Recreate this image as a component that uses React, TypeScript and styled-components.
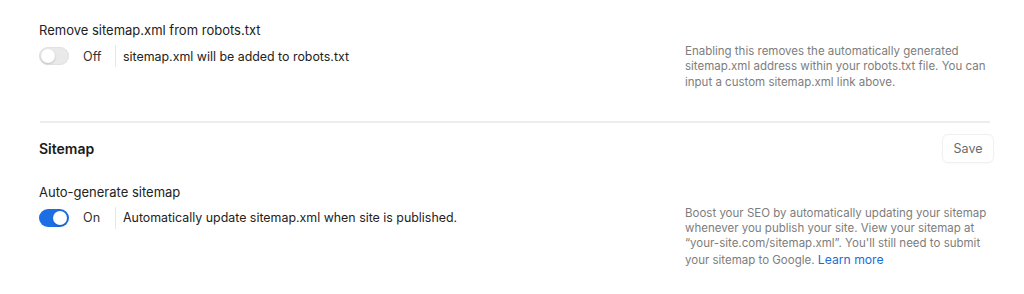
import React from "react";
import styled, { createGlobalStyle } from "styled-components";

const GlobalStyle = createGlobalStyle`
  html, body {
    margin: 0;
    padding: 0;
    background: #ffffff;
  }
  body {
    font-family: Inter, "Noto Sans", "Liberation Sans", sans-serif;
    color: #1f1f1f;
    -webkit-font-smoothing: antialiased;
  }
`;

const Page = styled.div`
  width: 954px;
  margin-left: 39px;
  display: flex;
  flex-direction: column;
`;

const Section = styled.section<{ $top: number; $bottom: number }>`
  display: grid;
  grid-template-columns: 646px 1fr;
  align-items: start;
  padding-top: ${(p) => p.$top}px;
  padding-bottom: ${(p) => p.$bottom}px;
`;

const Control = styled.div`
  display: flex;
  flex-direction: column;
  gap: 6px;
`;

const Label = styled.div`
  font-size: 13px;
  line-height: 18px;
  color: #222222;
`;

const ToggleRow = styled.div`
  display: flex;
  align-items: center;
  height: 22px;
`;

const Track = styled.span<{ $on: boolean }>`
  position: relative;
  flex: none;
  width: 30px;
  height: 18px;
  border-radius: 9px;
  background: ${(p) => (p.$on ? "#1b6ee3" : "#e9e9e9")};
  box-shadow: ${(p) => (p.$on ? "none" : "inset 0 0 0 1px #e2e2e2")};
`;

const Knob = styled.span<{ $on: boolean }>`
  position: absolute;
  top: 2px;
  left: ${(p) => (p.$on ? "14px" : "2px")};
  width: 14px;
  height: 14px;
  border-radius: 50%;
  background: #ffffff;
  box-shadow: 0 1px 2px rgba(0, 0, 0, 0.18);
`;

const Status = styled.span`
  width: 32px;
  margin-left: 14px;
  font-size: 12.6px;
  color: #333333;
`;

const VDivider = styled.span`
  width: 1px;
  height: 22px;
  background: #e6e6e6;
  margin-right: 7px;
`;

const Desc = styled.span`
  font-size: 12.4px;
  color: #222222;
`;

const Help = styled.p<{ $offset: number }>`
  margin: ${(p) => p.$offset}px 0 0;
  width: 306px;
  font-size: 11.5px;
  line-height: 15.3px;
  color: #7d7d7d;
`;

const Link = styled.a`
  color: #1a6dd4;
  text-decoration: none;
  font-size: 12.2px;
  line-height: 15px;
`;

const Rule = styled.hr`
  margin: 0 3px 0 1px;
  border: none;
  height: 2px;
  background: #ededed;
`;

const Header = styled.div`
  display: flex;
  align-items: center;
  justify-content: space-between;
  margin-top: 11px;
  height: 29px;
`;

const Heading = styled.h2`
  margin: 0;
  font-size: 14px;
  font-weight: 600;
  color: #1a1a1a;
`;

const SaveButton = styled.button`
  height: 29px;
  width: 52px;
  margin-right: -1px;
  border: 1px solid #f0f0f0;
  border-radius: 6px;
  background: #ffffff;
  font-family: inherit;
  font-size: 12.5px;
  color: #6b6b6b;
  box-shadow: 0 1px 2px rgba(0, 0, 0, 0.03);
`;

const Toggle = ({ on, status, desc }: { on: boolean; status: string; desc: string }) => (
  <ToggleRow>
    <Track $on={on}>
      <Knob $on={on} />
    </Track>
    <Status>{status}</Status>
    <VDivider />
    <Desc>{desc}</Desc>
  </ToggleRow>
);

export default function App() {
  return (
    <>
      <GlobalStyle />
      <Page>
        <Section $top={21} $bottom={31}>
          <Control>
            <Label>Remove sitemap.xml from robots.txt</Label>
            <Toggle on={false} status="Off" desc="sitemap.xml will be added to robots.txt" />
          </Control>
          <Help $offset={23}>
            Enabling this removes the automatically generated sitemap.xml address within your
            robots.txt file. You can input a custom sitemap.xml link above.
          </Help>
        </Section>
        <Rule />
        <Header>
          <Heading>Sitemap</Heading>
          <SaveButton>Save</SaveButton>
        </Header>
        <Section $top={20} $bottom={20}>
          <Control>
            <Label>Auto-generate sitemap</Label>
            <Toggle
              on={true}
              status="On"
              desc="Automatically update sitemap.xml when site is published."
            />
          </Control>
          <Help $offset={23}>
            Boost your SEO by automatically updating your sitemap whenever you publish your site.
            View your sitemap at “your-site.com/sitemap.xml”. You'll still need to submit your
            sitemap to Google. <Link href="#">Learn more</Link>
          </Help>
        </Section>
      </Page>
    </>
  );
}
